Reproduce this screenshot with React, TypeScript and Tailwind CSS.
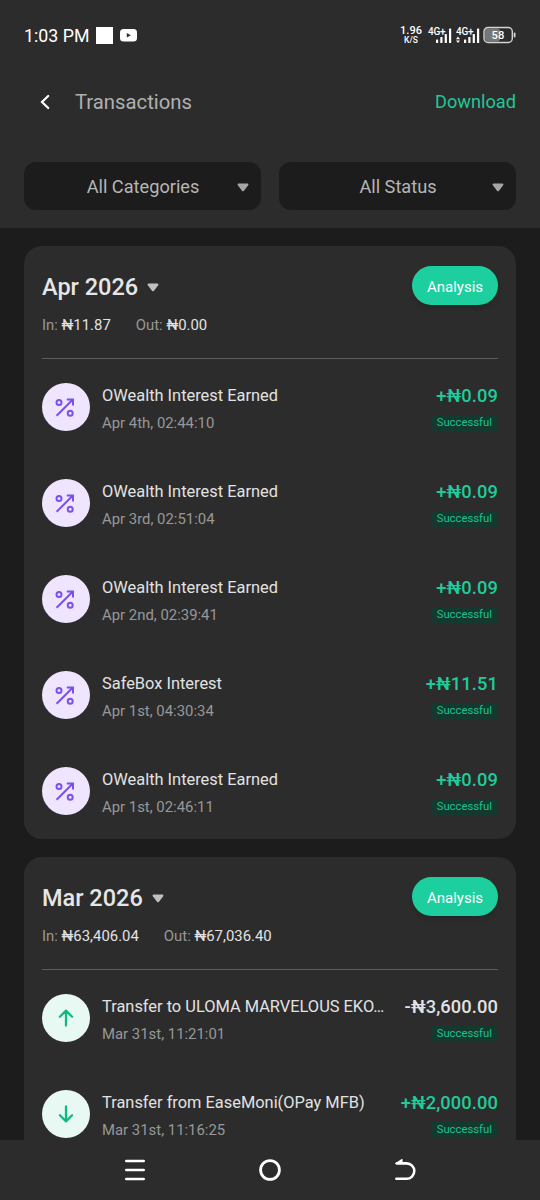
import React from 'react';

type Kind = 'interest' | 'out' | 'in';

interface Transaction {
  kind: Kind;
  title: string;
  date: string;
  amount: string;
}

interface MonthGroup {
  month: string;
  totalIn: string;
  totalOut: string;
  items: Transaction[];
}

const groups: MonthGroup[] = [
  {
    month: 'Apr 2026',
    totalIn: '₦11.87',
    totalOut: '₦0.00',
    items: [
      { kind: 'interest', title: 'OWealth Interest Earned', date: 'Apr 4th, 02:44:10', amount: '+₦0.09' },
      { kind: 'interest', title: 'OWealth Interest Earned', date: 'Apr 3rd, 02:51:04', amount: '+₦0.09' },
      { kind: 'interest', title: 'OWealth Interest Earned', date: 'Apr 2nd, 02:39:41', amount: '+₦0.09' },
      { kind: 'interest', title: 'SafeBox Interest', date: 'Apr 1st, 04:30:34', amount: '+₦11.51' },
      { kind: 'interest', title: 'OWealth Interest Earned', date: 'Apr 1st, 02:46:11', amount: '+₦0.09' },
    ],
  },
  {
    month: 'Mar 2026',
    totalIn: '₦63,406.04',
    totalOut: '₦67,036.40',
    items: [
      { kind: 'out', title: 'Transfer to ULOMA MARVELOUS EKO…', date: 'Mar 31st, 11:21:01', amount: '-₦3,600.00' },
      { kind: 'in', title: 'Transfer from EaseMoni(OPay MFB)', date: 'Mar 31st, 11:16:25', amount: '+₦2,000.00' },
    ],
  },
];

const Caret: React.FC<{ className?: string }> = ({ className }) => (
  <svg width="12" height="9" viewBox="0 0 12 9" className={className} fill="currentColor">
    <path d="M1.6 0.5h8.8c.9 0 1.3 1 .8 1.7L7 7.8c-.5.7-1.5.7-2 0L.8 2.2C.3 1.5.7.5 1.6.5z" />
  </svg>
);

const Signal: React.FC<{ arrows?: boolean }> = ({ arrows }) => (
  <div className="relative h-[18px] w-[24px]">
    <span className="absolute left-0 top-0 text-[10px] font-medium leading-[11px] tracking-[-0.2px]">4G+</span>
    <svg width="24" height="18" viewBox="0 0 24 18" fill="currentColor" className="absolute left-0 top-0">
      {arrows && <path d="M2 10.6l2 2.6H0zM2 17l2-2.6H0z" />}
      <rect x="8" y="13.5" width="2.2" height="3.5" rx="0.6" />
      <rect x="12.3" y="11" width="2.2" height="6" rx="0.6" />
      <rect x="16.7" y="8" width="2.2" height="9" rx="0.6" />
      <rect x="21" y="2.5" width="2.2" height="14.5" rx="0.6" />
    </svg>
  </div>
);

const StatusBar = () => (
  <div className="flex h-[70px] items-center pl-6 pr-[23px] text-white">
    <span className="mt-0.5 w-[72px] whitespace-nowrap text-[17.8px] leading-5">1:03 PM</span>
    <span className="size-[17px] bg-white" />
    <svg width="17" height="13" viewBox="0 0 17 13" className="ml-[7px]">
      <rect width="17" height="12.5" rx="3.5" fill="#fff" />
      <path d="M6.8 3.9v4.6l4-2.3z" fill="#2c2c2c" />
    </svg>
    <div className="ml-auto flex items-center">
      <div className="flex w-[22px] flex-col items-center">
        <span className="text-[11px] font-medium leading-[10px]">1.96</span>
        <span className="text-[8.5px] font-medium leading-[8px]">K/S</span>
      </div>
      <div className="ml-[6px] flex gap-[4px]">
        <Signal />
        <Signal arrows />
      </div>
      <svg width="34" height="18" viewBox="0 0 34 18" className="ml-[3px]">
        <rect x="2" y="2.5" width="15" height="13" rx="3" fill="#777" />
        <rect x="1" y="1.5" width="28.3" height="15" rx="4" fill="none" stroke="#d4d4d4" strokeWidth="1.4" />
        <rect x="30.7" y="6.5" width="1.8" height="5" rx="0.9" fill="#d4d4d4" />
        <text x="14.9" y="13" textAnchor="middle" fill="#fff" fontSize="11.2" fontWeight="500">58</text>
      </svg>
    </div>
  </div>
);

const FilterSelect: React.FC<{ label: string }> = ({ label }) => (
  <button className="flex h-12 flex-1 items-center rounded-xl bg-[#1c1c1c] pl-[25px] pr-3 text-[#b6b6b6]">
    <span className="mt-px flex-1 text-center text-[18.2px] leading-6">{label}</span>
    <Caret className="mt-[2px] text-[#a5a5a5]" />
  </button>
);

const KindIcon: React.FC<{ kind: Kind }> = ({ kind }) => {
  if (kind === 'interest') {
    return (
      <span className="flex size-12 shrink-0 items-center justify-center rounded-full bg-[#efe5fe]">
        <svg width="24" height="24" viewBox="0 0 24 24" fill="none" stroke="#7a50ee" strokeWidth="2">
          <path d="M2.6 20.8L18.6 4.8M12.8 4.4H19v6.2" />
          <circle cx="5" cy="7.4" r="2.5" />
          <circle cx="16.2" cy="18.2" r="2.5" />
        </svg>
      </span>
    );
  }
  return (
    <span className="flex size-12 shrink-0 items-center justify-center rounded-full bg-[#e8f9f4]">
      <svg
        width="24"
        height="24"
        viewBox="0 0 24 24"
        fill="none"
        stroke="#10b981"
        strokeWidth="2.3"
        strokeLinecap="round"
        strokeLinejoin="round"
        className={kind === 'in' ? 'rotate-180' : ''}
      >
        <path d="M12 19.6V4.6M5.9 10.7L12 4.6l6.1 6.1" />
      </svg>
    </span>
  );
};

const TransactionRow: React.FC<{ item: Transaction }> = ({ item }) => (
  <div className="flex h-24 items-center">
    <KindIcon kind={item.kind} />
    <div className="ml-3 min-w-0 flex-1 pt-[5px]">
      <p className="whitespace-nowrap text-[16.4px] leading-6 text-[#e2e2e2]">{item.title}</p>
      <p className="mt-[3px] text-[14.9px] leading-6 text-[#989898]">{item.date}</p>
    </div>
    <div className="ml-4 flex shrink-0 flex-col items-end pt-1">
      <p
        className={`text-[18.3px] font-medium leading-6 tracking-[0.1px] ${item.kind === 'out' ? 'text-[#e2e2e2]' : 'text-[#1fcb9a]'}`}
      >
        {item.amount}
      </p>
      <span className="mt-[7px] mb-[3px] flex h-4 items-center rounded bg-[#14392e] px-[6px] text-[11.3px] text-[#22c08f]">
        Successful
      </span>
    </div>
  </div>
);

const MonthCard: React.FC<{ group: MonthGroup }> = ({ group }) => (
  <section className="rounded-[18px] bg-[#2c2c2c] px-[18px]">
    <div className="flex h-[113px] flex-col border-b border-[#5e5e5e] pt-5">
      <div className="flex h-[39px] items-center">
        <h2 className="mt-0.5 text-[23.5px] font-medium leading-8 text-[#e6e6e6]">{group.month}</h2>
        <Caret className="ml-[9px] mt-[3px] text-[#c0c0c0]" />
        <button className="ml-auto h-[39px] w-[86px] rounded-full bg-[#1dcf9f] pt-[3px] text-[15px] text-white shadow-md">
          Analysis
        </button>
      </div>
      <div className="mt-2 flex gap-[25px] text-[14.9px] leading-6 text-[#989898]">
        <p>
          In: <span className="text-[#e2e2e2]">{group.totalIn}</span>
        </p>
        <p>
          Out: <span className="text-[#e2e2e2]">{group.totalOut}</span>
        </p>
      </div>
    </div>
    {group.items.map((item) => (
      <TransactionRow key={item.date} item={item} />
    ))}
  </section>
);

const NavBar = () => (
  <nav className="flex h-[60px] shrink-0 items-center justify-center gap-[111px] bg-[#2c2c2c] text-white">
    <svg width="24" height="24" viewBox="0 0 24 24" fill="none" stroke="currentColor" strokeWidth="2.6" strokeLinecap="round">
      <path d="M3.3 3h17.4M3.3 12h17.4M3.3 21h17.4" />
    </svg>
    <svg width="24" height="24" viewBox="0 0 24 24" fill="none" stroke="currentColor" strokeWidth="2.8">
      <circle cx="12" cy="12" r="9.4" />
    </svg>
    <svg width="24" height="24" viewBox="0 0 24 24" fill="none" stroke="currentColor" strokeWidth="2.6" strokeLinecap="round" strokeLinejoin="round">
      <path d="M3.8 5.4h9.8a7.7 7.7 0 010 15.4H3.4" />
      <path d="M3 5.4L9 1.6v3.6z" fill="currentColor" strokeWidth="1.2" />
    </svg>
  </nav>
);

export default function App() {
  return (
    <div className="flex h-[1200px] w-[540px] flex-col overflow-hidden bg-[#1c1c1c] font-[Roboto,sans-serif]">
      <header className="h-[228px] shrink-0 bg-[#2c2c2c]">
        <StatusBar />
        <div className="flex h-16 items-center pl-[39px] pr-6">
          <svg width="12" height="16" viewBox="0 0 12 16" fill="none" stroke="#fff" strokeWidth="2.2" strokeLinecap="round">
            <path d="M9.2 2L3 8l6.2 6" />
          </svg>
          <h1 className="ml-6 text-[20.3px] leading-6 text-[#b0b0b0]">Transactions</h1>
          <button className="ml-auto text-[18.2px] leading-6 text-[#22c797]">Download</button>
        </div>
        <div className="mt-7 flex gap-[18px] px-6">
          <FilterSelect label="All Categories" />
          <FilterSelect label="All Status" />
        </div>
      </header>
      <main className="flex min-h-0 flex-1 flex-col gap-[18px] overflow-hidden px-6 pt-[18px] *:shrink-0">
        {groups.map((group) => (
          <MonthCard key={group.month} group={group} />
        ))}
      </main>
      <NavBar />
    </div>
  );
}
